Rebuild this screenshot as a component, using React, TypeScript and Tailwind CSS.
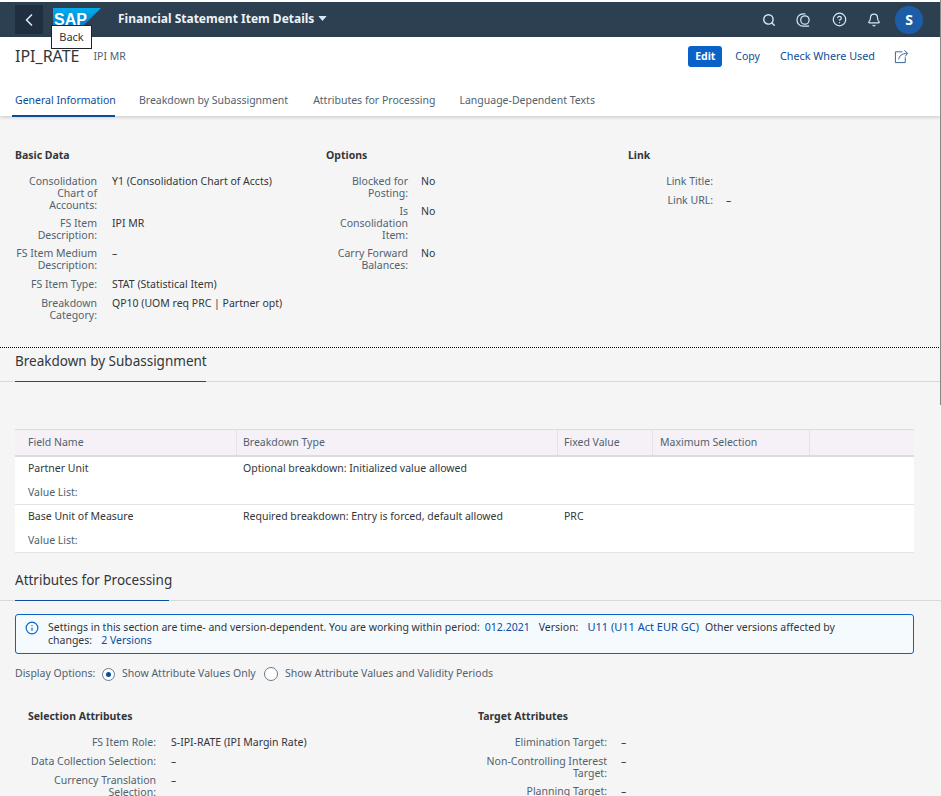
import { ChevronLeft, Search, HelpCircle, Bell, Info } from 'lucide-react';

const font = { fontFamily: '"Noto Sans", sans-serif' };

function Field({ label, value, labelWidth = 'w-[82px]', gap = 'ml-[15px]' }: { label: string; value: string; labelWidth?: string; gap?: string }) {
  return (
    <div className="flex min-h-[13px] leading-[12px]">
      <div className={`${labelWidth} shrink-0 text-right text-[#51626f]`}>{label}:</div>
      <div className={`${gap} text-[#32363a]`}>{value}</div>
    </div>
  );
}

function SectionTitle({ title, width }: { title: string; width: string }) {
  return (
    <div className="border-b border-[#d9d9d9] h-[34px]">
      <div className={`${width} ml-[15px] h-[34px] border-b border-[#0a4d9c] whitespace-nowrap text-[13.5px] leading-[26px] text-[#32363a]`}>{title}</div>
    </div>
  );
}

function Row({ name, type, fixed }: { name: string; type: string; fixed?: string }) {
  return (
    <div className="h-[48px] border-b border-[#e4e4e4] bg-white flex text-[#32363a]">
      <div className="w-[222px] pl-[13px] pt-[4px]">
        <div className="leading-[14px]">{name}</div>
        <div className="leading-[14px] mt-[10px] text-[#51626f]">Value List:</div>
      </div>
      <div className="w-[321px] pl-[6px] pt-[4px] leading-[14px]">{type}</div>
      <div className="pl-[6px] pt-[4px] leading-[14px]">{fixed}</div>
    </div>
  );
}

export default function App() {
  return (
    <div className="relative h-[796px] w-[941px] overflow-hidden bg-[#f5f5f5] text-[10.5px]" style={font}>
      <div className="h-[2px] bg-white" />
      <header className="h-[35px] bg-[#2c4052] flex items-center text-white">
        <button className="ml-[15px] h-[29px] w-[28px] bg-[#1f2f40] flex items-center justify-center">
          <ChevronLeft size={20} strokeWidth={2} className="text-[#d1e8ff]" />
        </button>
        <div className="relative ml-[10px] self-start mt-[6px] h-[24px] w-[48px]">
          <svg viewBox="0 0 48 24" className="h-[24px] w-[48px]">
            <defs>
              <linearGradient id="sap" x1="0" y1="0" x2="0" y2="1">
                <stop offset="0" stopColor="#00aeef" />
                <stop offset="1" stopColor="#0070c0" />
              </linearGradient>
            </defs>
            <path d="M0 0H48L24 24H0Z" fill="url(#sap)" />
          </svg>
          <span className="absolute left-[1px] top-[3px] text-[16px] font-bold leading-[18px] text-white" style={{ fontFamily: '"Liberation Sans", sans-serif' }}>SAP</span>
        </div>
        <span className="ml-[17px] -mt-[2px] text-[12px] font-bold whitespace-nowrap text-[#eef3f7]">Financial Statement Item Details</span>
        <svg viewBox="0 0 10 6" className="ml-[4px] -mt-[2px] h-[5px] w-[9px] fill-[#d1e8ff]"><path d="M0 0H10L5 6Z" /></svg>
        <div className="ml-auto flex items-center text-[#d1e8ff]">
          <Search size={14} strokeWidth={2.4} />
          <svg viewBox="0 0 16 16" className="ml-[20px] h-[16px] w-[15px] fill-none stroke-current" strokeWidth="1.3">
            <path d="M7.5 1.5A6.5 6.5 0 0 0 7.5 14.5H14" />
            <path d="M7.5 1.5H10" />
            <circle cx="9.5" cy="8" r="4.5" />
          </svg>
          <HelpCircle size={15} className="ml-[21px]" />
          <Bell size={14} className="ml-[20px]" />
          <div className="ml-[14px] mr-[18px] h-[28px] w-[28px] rounded-full bg-[#1d5da8] flex items-center justify-center text-[14px] font-bold text-white">S</div>
        </div>
      </header>

      <section className="h-[79px] bg-white shadow-[0_1px_4px_rgba(0,0,0,0.2)] relative">
        <div className="h-[50px] flex items-start pt-[8px] pl-[15px]">
          <span className="text-[16px] leading-[22px] text-[#32363a]">IPI_RATE</span>
          <span className="ml-[14px] text-[#51626f] leading-[22px]">IPI MR</span>
          <div className="ml-auto flex items-center text-[#0a4d9c] pt-[1px] pr-[32px]">
            <span className="h-[21px] w-[34px] rounded-[3px] bg-[#0a62c9] text-center font-bold leading-[21px] text-white">Edit</span>
            <span className="ml-[13px]">Copy</span>
            <span className="ml-[20px] text-[10.8px]">Check Where Used</span>
            <svg viewBox="0 0 16 16" className="ml-[19px] h-[15px] w-[15px] fill-none stroke-[#2b5c94]" strokeWidth="1">
              <path d="M9 3H1.5V14.5H12V9" />
              <path d="M5 11C5.5 7.5 8 5 14 4.5M11 1.5L14.5 4.5L12 8" />
            </svg>
          </div>
        </div>
        <nav className="flex h-[30px] pl-[12px] whitespace-nowrap text-[#51626f]">
          <span className="h-[30px] w-[103px] pl-[3px] border-b-2 border-[#0a4d9c] leading-[26px] text-[#0a4d9c]">General Information</span>
          <span className="ml-[24px] leading-[26px]">Breakdown by Subassignment</span>
          <span className="ml-[25px] leading-[26px]">Attributes for Processing</span>
          <span className="ml-[24px] leading-[26px]">Language-Dependent Texts</span>
        </nav>
      </section>

      <section className="h-[232px] border-b border-dotted border-black px-[15px] pt-[32px] grid grid-cols-[311px_302px_1fr]">
        <div>
          <h3 className="font-bold text-[#32363a] leading-[14px]">Basic Data</h3>
          <div className="mt-[13px] flex flex-col gap-[6.2px]">
            <Field label="Consolidation Chart of Accounts" value="Y1 (Consolidation Chart of Accts)" />
            <Field label="FS Item Description" value="IPI MR" />
            <Field label="FS Item Medium Description" value="–" />
            <Field label="FS Item Type" value="STAT (Statistical Item)" />
            <Field label="Breakdown Category" value="QP10 (UOM req PRC | Partner opt)" />
          </div>
        </div>
        <div>
          <h3 className="font-bold text-[#32363a] leading-[14px]">Options</h3>
          <div className="mt-[13px] flex flex-col gap-[6px]">
            <Field label="Blocked for Posting" value="No" labelWidth="w-[82px] pl-[7px]" gap="ml-[13px]" />
            <Field label="Is Consolidation Item" value="No" labelWidth="w-[82px] pl-[7px]" gap="ml-[13px]" />
            <Field label="Carry Forward Balances" value="No" labelWidth="w-[82px] pl-[7px]" gap="ml-[13px]" />
          </div>
        </div>
        <div>
          <h3 className="font-bold text-[#32363a] leading-[14px]">Link</h3>
          <div className="mt-[13px] flex flex-col gap-[6.2px]">
            <Field label="Link Title" value="" labelWidth="w-[85px]" gap="ml-[13px]" />
            <Field label="Link URL" value="–" labelWidth="w-[85px]" gap="ml-[13px]" />
          </div>
        </div>
      </section>

      <SectionTitle title="Breakdown by Subassignment" width="w-[191px]" />

      <div className="mt-[47px] ml-[15px] w-[899px]">
        <div className="h-[28px] flex border-t border-b-2 border-[#dcdcdc] bg-[#f5f1f7] text-[#51626f] leading-[24px]">
          <div className="w-[222px] pl-[13px] border-r border-[#e4e4e4]">Field Name</div>
          <div className="w-[321px] pl-[6px] border-r border-[#e4e4e4]">Breakdown Type</div>
          <div className="w-[95px] pl-[6px] border-r border-[#e4e4e4]">Fixed Value</div>
          <div className="w-[157px] pl-[7px] border-r border-[#e4e4e4]">Maximum Selection</div>
        </div>
        <Row name="Partner Unit" type="Optional breakdown: Initialized value allowed" />
        <Row name="Base Unit of Measure" type="Required breakdown: Entry is forced, default allowed" fixed="PRC" />
      </div>

      <div className="mt-[14px]">
        <SectionTitle title="Attributes for Processing" width="w-[154px]" />
      </div>

      <div className="mt-[13px] ml-[15px] w-[899px] h-[40px] rounded-[3px] border border-[#0a62c9] bg-[#f5faff] flex text-[#32363a]">
        <Info size={14} className="ml-[9px] mt-[6px] shrink-0 text-[#0a62c9]" />
        <p className="ml-[9px] mt-[5px] w-[800px] leading-[13px]">
          Settings in this section are time- and version-dependent. You are working within period:
          <span className="ml-[5px] text-[#0a4d9c]">012.2021</span>
          <span className="ml-[9px]">Version:</span>
          <span className="ml-[9px] text-[11px] text-[#0a4d9c]">U11 (U11 Act EUR GC)</span>
          <span className="ml-[6px]">Other versions affected by changes:</span>
          <span className="ml-[9px] text-[#0a4d9c]">2 Versions</span>
        </p>
      </div>

      <div className="mt-[12px] ml-[15px] flex items-center text-[#51626f] h-[16px]">
        <span className="w-[87px]">Display Options:</span>
        <span className="h-[13px] w-[13px] rounded-full border border-[#6a7b88] bg-white flex items-center justify-center">
          <span className="h-[5px] w-[5px] rounded-full bg-[#0a4d9c]" />
        </span>
        <span className="ml-[7px] w-[142px]">Show Attribute Values Only</span>
        <span className="h-[14px] w-[14px] rounded-full border border-[#6a7b88] bg-white" />
        <span className="ml-[7px]">Show Attribute Values and Validity Periods</span>
      </div>

      <div className="mt-[27px] ml-[28px] grid grid-cols-[450px_1fr]">
        <div>
          <h3 className="font-bold text-[#32363a] leading-[14px]">Selection Attributes</h3>
          <div className="mt-[13px] flex flex-col gap-[6px]">
            <Field label="FS Item Role" value="S-IPI-RATE (IPI Margin Rate)" labelWidth="w-[128px]" />
            <Field label="Data Collection Selection" value="–" labelWidth="w-[128px]" />
            <Field label="Currency Translation Selection" value="–" labelWidth="w-[128px]" />
          </div>
        </div>
        <div>
          <h3 className="font-bold text-[#32363a] leading-[14px]">Target Attributes</h3>
          <div className="mt-[13px] flex flex-col gap-[6px]">
            <Field label="Elimination Target" value="–" labelWidth="w-[129px]" gap="ml-[14px]" />
            <Field label="Non-Controlling Interest Target" value="–" labelWidth="w-[129px]" gap="ml-[14px]" />
            <Field label="Planning Target" value="–" labelWidth="w-[129px]" gap="ml-[14px]" />
          </div>
        </div>
      </div>

      <div className="absolute left-[51px] top-[25px] h-[24px] w-[41px] border border-[#222] bg-white text-center text-[11px] leading-[22px] text-[#32363a]">Back</div>
      <div className="absolute right-0 top-0 h-[405px] w-[1px] bg-[#888]" />
    </div>
  );
}
